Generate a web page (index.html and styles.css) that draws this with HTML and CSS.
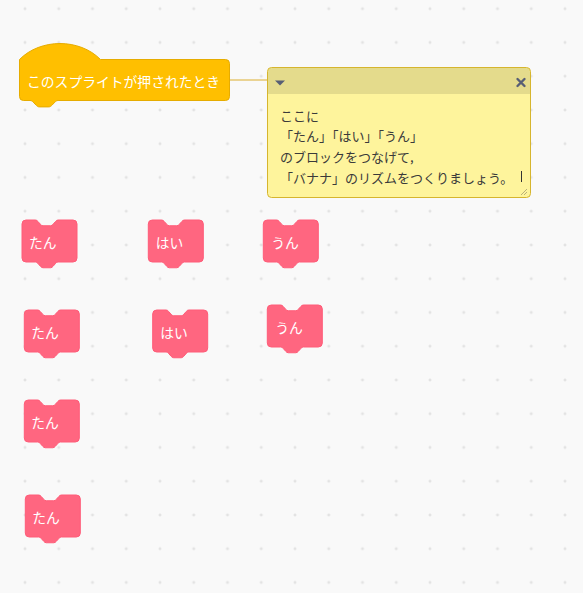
FILE: index.html
```html
<!DOCTYPE html>
<html lang="ja">
<head>
<meta charset="utf-8">
<title>Scratch workspace</title>
<link rel="stylesheet" href="styles.css">
</head>
<body>
<div class="workspace">
<svg class="canvas" width="583" height="593" viewBox="0 0 583 593">
  <defs>
    <pattern id="grid" patternUnits="userSpaceOnUse" width="33.75" height="33.75" x="8.125" y="-8.175">
      <path class="grid-cross" d="M15.375,16.875 h3 M16.875,15.375 v3"/>
    </pattern>
    <path id="pink" d="M0,4 A4,4 0 0 1 4,0 H13.4 c1.26,0 1.9,0.72 2.52,1.44 l2.52,2.88 c0.63,0.72 1.26,1.44 2.52,1.44 h7.56 c1.26,0 1.9,-0.72 2.52,-1.44 l2.52,-2.88 c0.63,-0.72 1.26,-1.44 2.52,-1.44 H51 A4,4 0 0 1 55,4 V38 A4,4 0 0 1 51,42 H36.08 c-1.26,0 -1.9,0.72 -2.52,1.44 l-2.52,2.88 c-0.63,0.72 -1.26,1.44 -2.52,1.44 h-7.56 c-1.26,0 -1.9,-0.72 -2.52,-1.44 l-2.52,-2.88 c-0.63,-0.72 -1.26,-1.44 -2.52,-1.44 H4 A4,4 0 0 1 0,38 Z"/>
  </defs>
  <rect class="bg" x="0" y="0" width="583" height="593"/>
  <rect x="0" y="0" width="583" height="593" fill="url(#grid)"/>

  <line class="comment-link" x1="229" y1="80" x2="268" y2="80"/>

  <g class="hat" transform="translate(19.5 59.5)">
    <path d="M0,0 c21,-21.3 60,-21.3 81,0 H206 A4,4 0 0 1 210,4 V37 A4,4 0 0 1 206,41 H38.6 c-1.56,0 -2.34,0.8 -3.12,1.6 l-3.12,3.2 c-0.78,0.8 -1.56,1.6 -3.12,1.6 h-9.36 c-1.56,0 -2.34,-0.8 -3.12,-1.6 l-3.12,-3.2 c-0.78,-0.8 -1.56,-1.6 -3.12,-1.6 H4 A4,4 0 0 1 0,37 Z"/>
    <text class="block-label" x="7.5" y="21">このスプライトが押されたとき</text>
  </g>

  <g class="comment">
    <rect class="comment-body" x="267.5" y="67.5" width="263" height="130" rx="4"/>
    <path class="comment-top" d="M268,94 V72 A4,4 0 0 1 272,68 H526 A4,4 0 0 1 530,72 V94 Z"/>
    <rect class="comment-frame" x="267.5" y="67.5" width="263" height="130" rx="4"/>
    <path class="comment-icon" d="M275,80.5 H285 L280,85.5 Z"/>
    <path class="comment-close" d="M517.5,79 L524.5,86 M524.5,79 L517.5,86"/>
    <text class="comment-text" x="280" y="115">ここに</text>
    <text class="comment-text" x="280" y="135.8">「たん」「はい」「うん」</text>
    <text class="comment-text" x="280" y="156.6">のブロックをつなげて,</text>
    <text class="comment-text" x="280" y="177.3">「バナナ」のリズムをつくりましょう。</text>
    <line class="caret" x1="521.5" y1="171" x2="521.5" y2="182"/>
    <path class="resize" d="M521,195 L527,189 M524,195 L527,192"/>
  </g>

  <g class="block" transform="translate(22 220)"><use href="#pink"/><text class="block-label" x="7" y="22">たん</text></g>
  <g class="block" transform="translate(148.3 220)"><use href="#pink"/><text class="block-label" x="7.5" y="22">はい</text></g>
  <g class="block" transform="translate(263.3 220)"><use href="#pink"/><text class="block-label" x="8" y="22">うん</text></g>

  <g class="block" transform="translate(24.3 310)"><use href="#pink"/><text class="block-label" x="7" y="22">たん</text></g>
  <g class="block" transform="translate(152.7 310)"><use href="#pink"/><text class="block-label" x="7.5" y="22">はい</text></g>
  <g class="block" transform="translate(267.3 305)"><use href="#pink"/><text class="block-label" x="8" y="22">うん</text></g>

  <g class="block" transform="translate(24.3 400)"><use href="#pink"/><text class="block-label" x="7" y="22">たん</text></g>
  <g class="block" transform="translate(25.3 495)"><use href="#pink"/><text class="block-label" x="7" y="22">たん</text></g>
</svg>
</div>
</body>
</html>
```

FILE: styles.css
```css
html, body {
  margin: 0;
  padding: 0;
  background: #f9f9f9;
  overflow: hidden;
}

.workspace {
  width: 583px;
  height: 593px;
  position: relative;
}

.canvas {
  display: block;
  font-family: "Noto Sans CJK JP", "Noto Sans", sans-serif;
}

.bg {
  fill: #f9f9f9;
}

.grid-cross {
  stroke: #dcdcdc;
  stroke-width: 1;
  fill: none;
}

.comment-link {
  stroke: #dcae2e;
  stroke-width: 1;
}

.hat path {
  fill: #ffbf00;
  stroke: #e6ac00;
  stroke-width: 1;
}

.block use {
  fill: #ff6680;
  stroke: #ff5c78;
  stroke-width: 1;
}

.block-label {
  fill: #ffffff;
  font-size: 13.8px;
  dominant-baseline: central;
}

.comment-body {
  fill: #fef49c;
}

.comment-top {
  fill: #e4db8c;
}

.comment-frame {
  fill: none;
  stroke: #d6b52e;
  stroke-width: 1;
}

.comment-icon {
  fill: #575e75;
}

.comment-close {
  stroke: #575e75;
  stroke-width: 2.4;
  stroke-linecap: round;
  fill: none;
}

.comment-text {
  fill: #3a3a3a;
  font-size: 13px;
  dominant-baseline: central;
}

.caret {
  stroke: #333333;
  stroke-width: 1;
}

.resize {
  stroke: #b9b07a;
  stroke-width: 1;
  fill: none;
}
```
